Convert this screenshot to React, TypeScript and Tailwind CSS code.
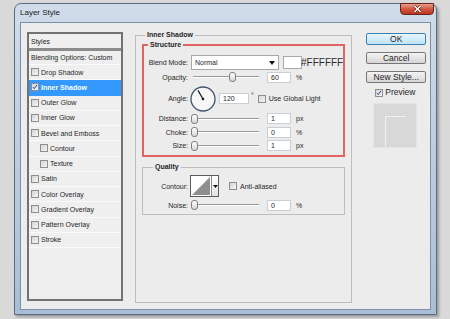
import type { ReactNode } from 'react';

type StyleItem = {
  label: string;
  checked?: boolean;
  selected?: boolean;
  indent?: boolean;
};

const styleItems: StyleItem[] = [
  { label: 'Drop Shadow' },
  { label: 'Inner Shadow', checked: true, selected: true },
  { label: 'Outer Glow' },
  { label: 'Inner Glow' },
  { label: 'Bevel and Emboss' },
  { label: 'Contour', indent: true },
  { label: 'Texture', indent: true },
  { label: 'Satin' },
  { label: 'Color Overlay' },
  { label: 'Gradient Overlay' },
  { label: 'Pattern Overlay' },
  { label: 'Stroke' },
];

function Checkbox({ checked = false }: { checked?: boolean }) {
  return (
    <div className="flex h-[8px] w-[8px] shrink-0 items-center justify-center border border-[#8e8e8e] bg-linear-to-br from-[#d4d4d4] to-[#f7f7f7]">
      {checked && (
        <svg width="8" height="8" viewBox="0 0 8 8">
          <path d="M1.2 4.2 L3 6.2 L6.6 1.2" fill="none" stroke="#1d3f8f" strokeWidth="1.3" />
        </svg>
      )}
    </div>
  );
}

function Slider({ pos }: { pos: number }) {
  return (
    <div className="relative ml-[3px] h-[12px] w-[70px] shrink-0">
      <div className="absolute left-[2px] right-[2px] top-[5px] h-[2px] border-t border-[#9a9a9a] bg-white" />
      <div
        className="absolute top-[1px] h-[10px] w-[7px] rounded-[3px] border border-[#808080] bg-linear-to-b from-white to-[#d6d6d6]"
        style={{ left: pos * 63 }}
      />
    </div>
  );
}

function NumBox({ value, width = 'w-[24px]' }: { value: string; width?: string }) {
  return (
    <div className={`flex h-[11px] ${width} shrink-0 items-center border border-[#c9cfd6] bg-white pl-[3px] text-[7px] leading-none`}>
      {value}
    </div>
  );
}

function Label({ children, w = 'w-[44px]' }: { children: ReactNode; w?: string }) {
  return <span className={`${w} shrink-0 text-right text-[7px] leading-none`}>{children}</span>;
}

function SliderRow({ label, value, unit, pos, h = 'h-[13px]' }: { label: string; value: string; unit: string; pos: number; h?: string }) {
  return (
    <div className={`flex ${h} items-center`}>
      <Label>{label}</Label>
      <Slider pos={pos} />
      <div className="ml-[6px]">
        <NumBox value={value} />
      </div>
      <span className="ml-[5px] text-[7px] leading-none">{unit}</span>
    </div>
  );
}

function StylesList() {
  return (
    <div className="ml-[6px] mt-[9px] h-[269px] w-[96px] shrink-0 border-2 border-[#727272] bg-[#efefef] text-[7px] leading-none">
      <div className="flex h-[14px] items-center pl-[2px]">Styles</div>
      <div className="h-[3px] bg-[#8c8c8c]" />
      <div className="flex h-[14px] items-center border-b border-[#fafafa] pl-[2px]">Blending Options: Custom</div>
      {styleItems.map((item) => (
        <div
          key={item.label}
          className={`flex h-[15.25px] items-center border-b ${
            item.selected ? 'border-[#3399ff] bg-[#3399ff] font-bold text-white' : 'border-[#fafafa]'
          } ${item.indent ? 'pl-[11px]' : 'pl-[2px]'}`}
        >
          <Checkbox checked={item.checked} />
          <span className="ml-[2px]">{item.label}</span>
        </div>
      ))}
    </div>
  );
}

function AngleDial() {
  const r = 10;
  const a = (120 * Math.PI) / 180;
  return (
    <svg width="26" height="26" viewBox="0 0 26 26" className="ml-[2px] shrink-0">
      <circle cx="13" cy="13" r="12" fill="#f7f7f7" stroke="#44546b" strokeWidth="1.3" />
      <line x1="13" y1="13" x2={13 + r * Math.cos(a)} y2={13 - r * Math.sin(a)} stroke="#1a1a1a" strokeWidth="1.2" />
      <circle cx="13" cy="13" r="1.3" fill="#1a1a1a" />
    </svg>
  );
}

function InnerShadowPanel() {
  return (
    <fieldset className="ml-[12px] mt-[8px] h-[272px] w-[214px] shrink-0 border border-[#bdbdbd] px-[6px] pt-[2px]">
      <legend className="ml-[3px] px-[2px] text-[7px] font-bold leading-[8px]">Inner Shadow</legend>

      <fieldset className="border-2 border-[#e06464] pt-[6px] pb-[3px]">
        <legend className="ml-[4px] px-[2px] text-[7px] font-bold leading-[8px]">Structure</legend>

        <div className="flex h-[15px] items-center">
          <Label>Blend Mode:</Label>
          <div className="ml-[3px] flex h-[15px] w-[88px] shrink-0 items-center justify-between border border-[#a9a9a9] bg-white pl-[3px] pr-[3px] text-[7px] leading-none">
            <span>Normal</span>
            <svg width="6" height="4" viewBox="0 0 6 4">
              <path d="M0 0 H6 L3 4 Z" fill="#111" />
            </svg>
          </div>
          <div className="ml-[4px] h-[13px] w-[19px] shrink-0 border border-[#a9a9a9] bg-white" />
          <span className="-ml-[1px] shrink-0 whitespace-nowrap text-[10px] leading-none text-[#2e2e2e]">#FFFFFF</span>
        </div>

        <SliderRow label="Opacity:" value="60" unit="%" pos={0.6} h="h-[14px]" />

        <div className="mt-[1px] flex h-[27px] items-center">
          <Label>Angle:</Label>
          <AngleDial />
          <div className="ml-[3px]">
            <NumBox value="120" width="w-[30px]" />
          </div>
          <span className="ml-[2px] self-start pt-[7px] text-[7px] leading-none">°</span>
          <div className="ml-[4px]">
            <Checkbox />
          </div>
          <span className="ml-[3px] text-[7px] leading-none">Use Global Light</span>
        </div>

        <SliderRow label="Distance:" value="1" unit="px" pos={0} />
        <SliderRow label="Choke:" value="0" unit="%" pos={0} h="h-[14px]" />
        <SliderRow label="Size:" value="1" unit="px" pos={0} />
      </fieldset>

      <fieldset className="mt-[6px] border border-[#bdbdbd] pt-[4px] pb-[3px]">
        <legend className="ml-[10px] px-[2px] text-[7px] font-bold leading-[8px]">Quality</legend>

        <div className="flex h-[22px] items-center">
          <Label w="w-[45px]">Contour:</Label>
          <div className="ml-[2px] flex h-[22px] w-[29px] shrink-0 border border-[#5c5c5c] bg-white">
            <svg width="20" height="20" viewBox="0 0 20 20" className="shrink-0">
              <rect x="0" y="0" width="20" height="20" fill="#fff" />
              <path d="M1 19 L19 1 L19 19 Z" fill="#8e8e8e" />
            </svg>
            <div className="flex flex-1 items-center justify-center border-l border-[#8a8a8a] bg-linear-to-b from-white to-[#e2e2e2]">
              <svg width="5" height="3" viewBox="0 0 5 3">
                <path d="M0 0 H5 L2.5 3 Z" fill="#111" />
              </svg>
            </div>
          </div>
          <div className="ml-[10px]">
            <Checkbox />
          </div>
          <span className="ml-[3px] text-[7px] leading-none">Anti-aliased</span>
        </div>

        <div className="mt-[2px] flex h-[12px] items-center">
          <Label w="w-[45px]">Noise:</Label>
          <Slider pos={0} />
          <div className="ml-[6px]">
            <NumBox value="0" />
          </div>
          <span className="ml-[5px] text-[7px] leading-none">%</span>
        </div>
      </fieldset>
    </fieldset>
  );
}

function Button({ children, primary = false, className = '' }: { children: ReactNode; primary?: boolean; className?: string }) {
  return (
    <div
      className={`flex h-[12px] w-[60px] items-center justify-center rounded-[2px] border text-[8.5px] leading-none ${
        primary
          ? 'border-[#3c7fb1] bg-linear-to-b from-[#eaf6fd] to-[#bde3f8]'
          : 'border-[#767676] bg-linear-to-b from-[#f4f4f4] to-[#d6d6d6]'
      } ${className}`}
    >
      {children}
    </div>
  );
}

function Buttons() {
  return (
    <div className="ml-[14px] mt-[10px] flex w-[60px] shrink-0 flex-col">
      <Button primary>OK</Button>
      <Button className="mt-[7px]">Cancel</Button>
      <Button className="mt-[7px]">New Style...</Button>
      <div className="mt-[5px] flex h-[9px] items-center pl-[9px]">
        <Checkbox checked />
        <span className="ml-[2px] text-[8.5px] leading-none">Preview</span>
      </div>
      <div className="ml-[7px] mt-[6px] h-[45px] w-[44px] border border-[#e4e4e4] bg-[#d8d8d8] pl-[11px] pt-[12px]">
        <div className="h-[31px] w-[21px] border-l border-t border-[#f1f1f1]" />
      </div>
    </div>
  );
}

function CloseButton() {
  return (
    <div className="-mr-[3px] -mt-[1px] flex h-[12px] w-[34px] items-center justify-center rounded-b-[4px] border border-[#6a2318] bg-linear-to-b from-[#e6a08e] via-[#d2563f] to-[#b93520]">
      <svg width="9" height="8" viewBox="0 0 9 8">
        <path d="M1.5 1 L7.5 7 M7.5 1 L1.5 7" stroke="#5b1a10" strokeWidth="2.6" />
        <path d="M1.5 1 L7.5 7 M7.5 1 L1.5 7" stroke="#ffffff" strokeWidth="1.5" />
      </svg>
    </div>
  );
}

export default function App() {
  return (
    <div className="h-[319px] w-[450px] overflow-hidden bg-[#d9d9d9] pl-[14px] pt-[3px] font-['Liberation_Sans',Arial,sans-serif] text-[#262626]">
      <div className="flex h-[312px] w-[423px] flex-col rounded-t-[7px] border border-[#5b6b80] bg-linear-to-b from-[#d0dcea] via-[#bccde0] to-[#a9bed6] px-[5px] pb-[4px] shadow-[2px_2px_3px_rgba(0,0,0,0.3)]">
        <div className="flex h-[18px] shrink-0 items-start justify-between">
          <span className="pt-[5px] text-[8px] leading-[8px] text-[#1b1b1b]">Layer Style</span>
          <CloseButton />
        </div>
        <div className="flex flex-1 items-start border border-[#7e90a6] bg-[#ececec]">
          <StylesList />
          <InnerShadowPanel />
          <Buttons />
        </div>
      </div>
    </div>
  );
}
